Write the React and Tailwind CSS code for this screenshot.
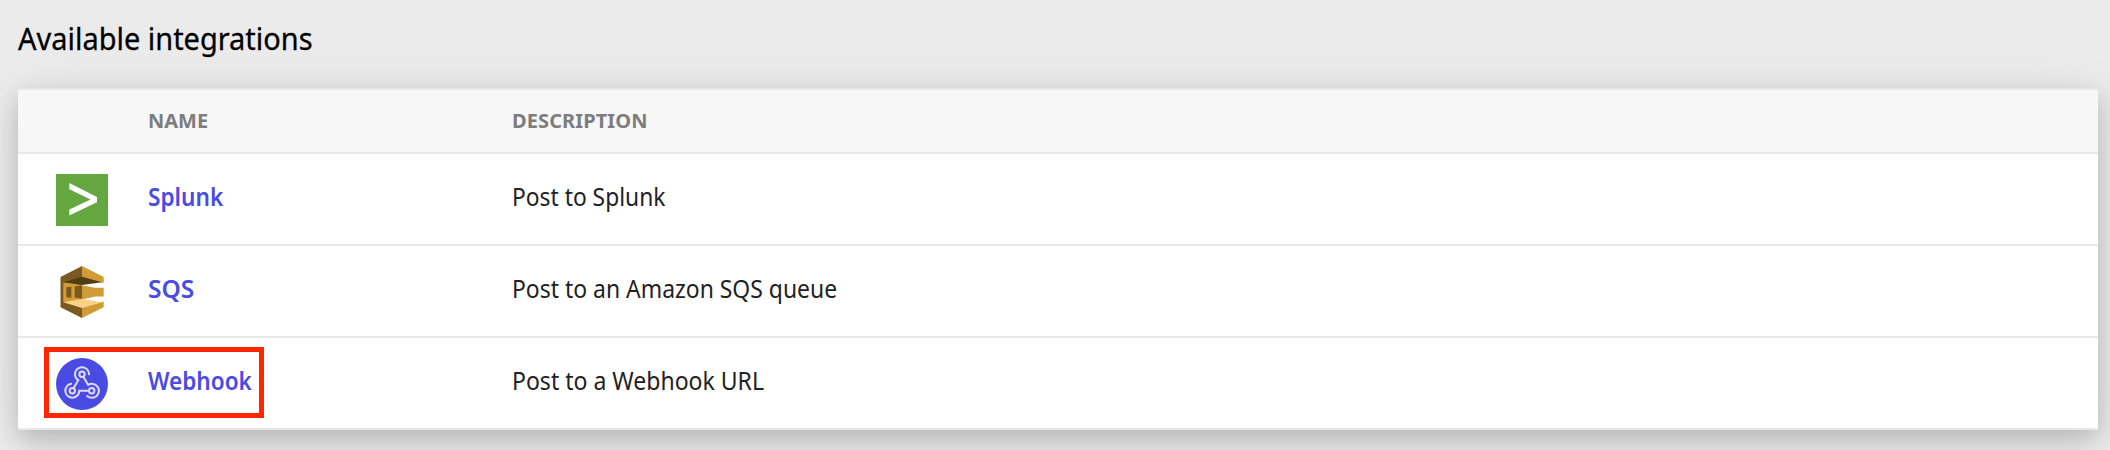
function SplunkIcon() {
  return (
    <svg viewBox="0 0 52 52" className="size-[52px]" aria-hidden="true">
      <rect width="52" height="52" fill="#64a63f" />
      <path d="M13.3 9 41 23v5.2L13.3 41.5v-6L34.5 25.6 13.3 15.2z" fill="#fff" />
    </svg>
  );
}

function SqsIcon() {
  return (
    <svg viewBox="0 0 52 52" className="size-[52px]" aria-hidden="true">
      <path d="M4.5 11 26 0v52L4.5 41.3z" fill="#7a5a20" />
      <path d="M26 0 47.7 11v6L26 12z" fill="#d19b35" />
      <path d="M26 52 47.7 41.3V35.500L26 40z" fill="#d19b35" />
      <path d="M7.3 16.500H26V36H7.3z" fill="#d19b35" />
      <path d="M7.3 16.200 26 10.800l20 5.400L26 19z" fill="#523c14" />
      <path d="M10.300 21.300 15.300 20.800v11l-5-.5zM18.700 20.500 26 19.300v13.500l-7.300-1.300z" fill="#7a5a20" />
      <path d="M26 19.300l13 2.500h8.700v8.700H39L26 33.500z" fill="#d19b35" />
      <path d="M7.3 36.200 26 33l20.500 3.200L26 42z" fill="#fbd187" />
    </svg>
  );
}

function WebhookIcon() {
  return (
    <svg viewBox="0 0 52 52" className="size-[52px]" aria-hidden="true">
      <circle cx="26" cy="26" r="26" fill="#4a4be3" />
      <g fill="none" stroke="#dcdcfa" strokeWidth="2" strokeLinecap="round">
        <circle cx="26" cy="16.3" r="2.7" />
        <circle cx="16.3" cy="32.7" r="2.7" />
        <circle cx="35.7" cy="32.7" r="2.7" />
        <path d="M33 16.300a7 7 0 1 0-10.700 5.900l-4.600 7.900" />
        <path d="M27.400 18.700l4.800 8.200a7 7 0 1 1-1 11.100" />
        <path d="M32.900 32.700h-9.600a7 7 0 1 1-8.200-6.900" />
      </g>
    </svg>
  );
}

const rows = [
  { name: "Splunk", nameScale: "scale-x-[0.905]", description: "Post to Splunk", scale: "scale-x-[0.912]", Icon: SplunkIcon },
  { name: "SQS", nameScale: "scale-x-[0.98]", description: "Post to an Amazon SQS queue", scale: "scale-x-[0.917]", Icon: SqsIcon },
  { name: "Webhook", nameScale: "scale-x-[0.902]", description: "Post to a Webhook URL", scale: "scale-x-[0.921]", Icon: WebhookIcon, highlighted: true },
];

export default function App() {
  return (
    <main className="h-[450px] overflow-hidden bg-[#ebebeb] pl-[18px] pr-3 font-['Noto_Sans',sans-serif]">
      <h1 className="flex h-[88px] items-center pb-[12px] text-[31px] leading-none text-black">
        <span className="origin-left scale-x-[0.934] [-webkit-text-stroke:0.3px]">Available integrations</span>
      </h1>
      <section className="border-t-2 border-[#e8e8e8] bg-white shadow-[0_10px_26px_rgba(0,0,0,0.22),0_0_60px_rgba(0,0,0,0.04)]">
        <header className="grid h-16 grid-cols-[130px_364px_1fr] items-center border-b-2 border-[#e8e8e8] bg-[#f7f7f7] text-[20px] leading-none font-bold text-[#7d7d7d]">
          <span />
          <span>NAME</span>
          <span className="tracking-[0.1px]">DESCRIPTION</span>
        </header>
        {rows.map(({ name, nameScale, description, scale, Icon, highlighted }) => (
          <div key={name} className="relative grid h-[92px] grid-cols-[130px_364px_1fr] items-center border-b-2 border-[#e8e8e8] text-[25px] leading-none">
            <div className="pt-[2px] pl-[38px]">
              <Icon />
            </div>
            <div className="pb-[6px] font-semibold text-[#4a4be3]">
              <span className={`inline-block origin-left ${nameScale}`}>{name}</span>
            </div>
            <div className="pb-[6px] text-[#222]">
              <span className={`inline-block origin-left ${scale}`}>{description}</span>
            </div>
            {highlighted && <div className="absolute top-[9px] left-[26px] h-[71px] w-[220px] border-5 border-[#ff2600]" />}
          </div>
        ))}
      </section>
    </main>
  );
}
